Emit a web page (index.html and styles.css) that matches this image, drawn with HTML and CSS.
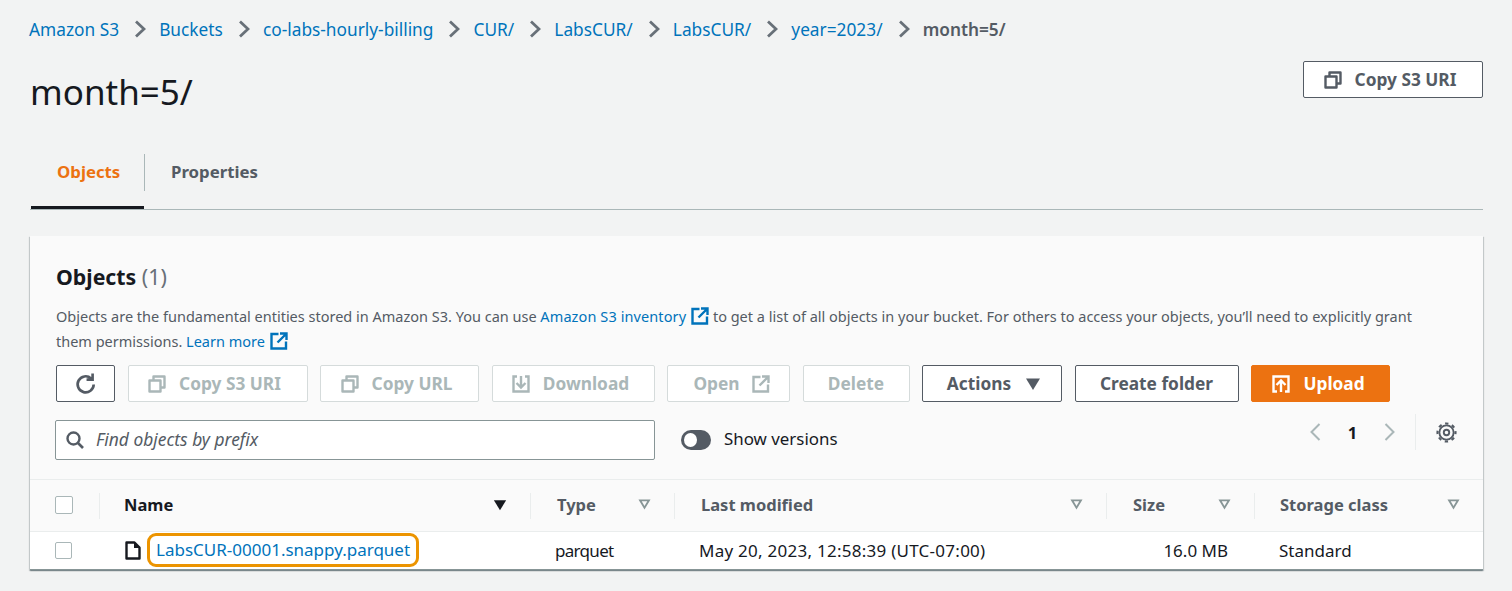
FILE: index.html
```html
<!DOCTYPE html>
<html lang="en">
<head>
  <meta charset="UTF-8">
  <title>month=5/ - S3 bucket</title>
  <link rel="stylesheet" href="styles.css">
</head>
<body>
  <svg class="sprites" width="0" height="0" aria-hidden="true">
    <symbol id="i-copy" viewBox="0 0 18 18">
      <path d="M5.500 5.500V1.500h11v11h-4M1.500 5.500h11v11h-11z" fill="none" stroke="currentColor" stroke-width="2.400" stroke-linejoin="round"/>
    </symbol>
    <symbol id="i-ext" viewBox="0 0 18 18">
      <path d="M8.500 2H1.500v14.500H16V9.500M10 1.500h6.500V8M16 2 7.500 10.500" fill="none" stroke="currentColor" stroke-width="2.400"/>
    </symbol>
    <symbol id="i-caret" viewBox="0 0 16 16">
      <path d="M1 2.500h14L8 14z" fill="currentColor"/>
    </symbol>
    <symbol id="i-caret-o" viewBox="0 0 14 14">
      <path d="M.5 1.500h13L7 12.500zM4 3.500 7 8.500l3-5z" fill="currentColor" fill-rule="evenodd"/>
    </symbol>
    <symbol id="i-chev" viewBox="0 0 12 18">
      <path d="M2 1.500 10 9l-8 7.500"/>
    </symbol>
  </svg>

  <nav class="crumbs">
    <a href="#">Amazon S3</a><svg class="sep"><use href="#i-chev"/></svg>
    <a href="#">Buckets</a><svg class="sep"><use href="#i-chev"/></svg>
    <a href="#">co-labs-hourly-billing</a><svg class="sep"><use href="#i-chev"/></svg>
    <a href="#">CUR/</a><svg class="sep"><use href="#i-chev"/></svg>
    <a href="#">LabsCUR/</a><svg class="sep"><use href="#i-chev"/></svg>
    <a href="#">LabsCUR/</a><svg class="sep"><use href="#i-chev"/></svg>
    <a href="#">year=2023/</a><svg class="sep"><use href="#i-chev"/></svg>
    <span class="current">month=5/</span>
  </nav>

  <header class="page-head">
    <h1>month=5/</h1>
    <button class="btn btn-uri"><svg class="ico"><use href="#i-copy"/></svg>Copy S3 URI</button>
  </header>

  <div class="tabs">
    <a class="tab active" href="#">Objects</a>
    <a class="tab" href="#">Properties</a>
  </div>

  <section class="card">
    <div class="card-head">
      <h2>Objects <span class="count">(1)</span></h2>
      <p class="desc">Objects are the fundamental entities stored in Amazon S3. You can use <a class="inv" href="#">Amazon S3 inventory<svg class="ext"><use href="#i-ext"/></svg></a> to get a list of all objects in your bucket. For others to access your objects, you’ll need to explicitly grant them permissions. <a href="#">Learn more<svg class="ext"><use href="#i-ext"/></svg></a></p>

      <div class="toolbar">
        <button class="btn btn-refresh" aria-label="Refresh">
          <svg class="ico-refresh" viewBox="0 0 20 20"><path d="M17 10.500a7.300 7.300 0 1 1-2.400-5.600M16 .5v5.500h-5.500" fill="none" stroke="currentColor" stroke-width="2.400"/></svg>
        </button>
        <button class="btn off w-uri"><svg class="ico"><use href="#i-copy"/></svg>Copy S3 URI</button>
        <button class="btn off w-url"><svg class="ico"><use href="#i-copy"/></svg>Copy URL</button>
        <button class="btn off w-down">
          <svg class="ico" viewBox="0 0 18 18"><path d="M5 1.500H1.500v15h15v-15H13M9 1v11M4.500 8 9 12.500 13.500 8" fill="none" stroke="currentColor" stroke-width="2.400"/></svg>Download
        </button>
        <button class="btn off w-open">Open<svg class="ico after"><use href="#i-ext"/></svg></button>
        <button class="btn off w-del">Delete</button>
        <button class="btn w-act">Actions<svg class="ico-caret"><use href="#i-caret"/></svg></button>
        <button class="btn w-folder">Create folder</button>
        <button class="btn primary">
          <svg class="ico" viewBox="0 0 18 18"><path d="M5 16.500H1.500v-15h15v15H13M9 17V6M4.500 10 9 5.500 13.500 10" fill="none" stroke="currentColor" stroke-width="2.400"/></svg>Upload
        </button>
      </div>

      <div class="filter-row">
        <label class="search">
          <svg class="ico-search" viewBox="0 0 18 18"><circle cx="7.500" cy="7.500" r="6" fill="none" stroke="currentColor" stroke-width="2.400"/><path d="M12 12l5 5" stroke="currentColor" stroke-width="2.600"/></svg>
          <span>Find objects by prefix</span>
        </label>
        <span class="toggle"><span class="knob"></span></span>
        <span class="toggle-label">Show versions</span>
        <div class="pager">
          <svg class="chev" viewBox="0 0 12 20"><path d="M10 2 2 10l8 8"/></svg>
          <span class="page-no">1</span>
          <svg class="chev" viewBox="0 0 12 20"><path d="M2 2l8 8-8 8"/></svg>
          <span class="pager-sep"></span>
          <svg class="gear" viewBox="0 0 20 20">
            <circle cx="10" cy="10" r="2.600" fill="none" stroke="currentColor" stroke-width="1.800"/>
            <circle cx="10" cy="10" r="6.800" fill="none" stroke="currentColor" stroke-width="1.800"/>
            <circle cx="10" cy="10" r="8.600" fill="none" stroke="currentColor" stroke-width="2" stroke-dasharray="3.200 3.550" stroke-dashoffset="1.600"/>
          </svg>
        </div>
      </div>
    </div>

    <div class="table">
      <div class="row head">
        <div class="cell c-check"><span class="box"></span></div>
        <div class="cell sep-l c-name"><b class="strong">Name</b><svg class="sort on"><use href="#i-caret"/></svg></div>
        <div class="cell sep-l"><b>Type</b><svg class="sort"><use href="#i-caret-o"/></svg></div>
        <div class="cell sep-l"><b>Last modified</b><svg class="sort"><use href="#i-caret-o"/></svg></div>
        <div class="cell sep-l"><b>Size</b><svg class="sort"><use href="#i-caret-o"/></svg></div>
        <div class="cell sep-l c-last"><b>Storage class</b><svg class="sort"><use href="#i-caret-o"/></svg></div>
      </div>
      <div class="row body">
        <div class="cell c-check"><span class="box small"></span></div>
        <div class="cell c-file">
          <svg class="ico-file" viewBox="0 0 16 19"><path d="M1.500 1.500h8L14.500 6.500v11h-13z" fill="none" stroke="currentColor" stroke-width="2.400" stroke-linejoin="round"/><path d="M9 1.500l5.500 5.500H9z" fill="currentColor"/></svg>
          <a class="focus" href="#">LabsCUR-00001.snappy.parquet</a>
        </div>
        <div class="cell tight">parquet</div>
        <div class="cell wide">May 20, 2023, 12:58:39 (UTC-07:00)</div>
        <div class="cell right">16.0 MB</div>
        <div class="cell">Standard</div>
      </div>
    </div>
  </section>
</body>
</html>
```

FILE: styles.css
```css
* {
  box-sizing: border-box;
}

body {
  margin: 0;
  padding: 0 29px 0 30px;
  height: 591px;
  overflow: hidden;
  background: #f2f3f3;
  color: #16191f;
  font-family: "Noto Sans", "Open Sans", sans-serif;
  font-size: 17px;
}

a {
  color: #0073bb;
  text-decoration: none;
}

.sprites {
  position: absolute;
}

/* breadcrumb */
.crumbs {
  display: flex;
  align-items: center;
  height: 20px;
  margin-top: 19px;
  margin-left: -1px;
  font-size: 17.300px;
  white-space: nowrap;
}

.sep {
  width: 12px;
  height: 18px;
  margin: 0 13.100px 0 15px;
  fill: none;
  stroke: #687078;
  stroke-width: 2.800;
}

.current {
  color: #545b64;
  font-weight: 600;
}

/* title row */
.page-head {
  display: flex;
  justify-content: space-between;
  align-items: flex-start;
  height: 115px;
}

h1 {
  margin: 30px 0 0;
  font-size: 35px;
  font-weight: 400;
  line-height: 46px;
}

.btn {
  display: inline-flex;
  align-items: center;
  justify-content: center;
  height: 37px;
  padding: 0;
  background: #fff;
  border: 1px solid #545b64;
  border-radius: 2px;
  color: #545b64;
  font: 700 17.300px "Noto Sans", sans-serif;
  white-space: nowrap;
}

.btn-uri {
  width: 180px;
  margin-top: 22px;
  padding-right: 6px;
}

.ico {
  width: 18px;
  height: 18px;
  margin-right: 13px;
  flex: none;
}

.ico.after {
  margin: 0 0 0 12px;
}

/* tabs */
.tabs {
  display: flex;
  height: 56px;
  border-bottom: 1px solid #aab7b8;
}

.tab {
  position: relative;
  display: flex;
  align-items: center;
  height: 37px;
  padding: 0 27px 2px 26px;
  color: #545b64;
  font-size: 16.800px;
  font-weight: 700;
}

.tab.active {
  width: 115px;
  padding-left: 27px;
  color: #ec7211;
  border-right: 1px solid #aab7b8;
}

.tab.active::after {
  content: "";
  position: absolute;
  left: 1px;
  right: 0;
  top: 52px;
  height: 3px;
  background: #16191f;
}

/* card */
.card {
  margin-top: 26px;
  height: 334px;
  background: #fafafa;
  box-shadow: 0 1px 1px 0 rgba(0, 28, 36, 0.3), 1px 1px 1px 0 rgba(0, 28, 36, 0.15), -1px 1px 1px 0 rgba(0, 28, 36, 0.15);
}

.card-head {
  height: 244px;
  padding: 26px 26px 0;
  border-bottom: 1px solid #eaeded;
}

h2 {
  margin: 0;
  font-size: 21.300px;
  font-weight: 700;
  line-height: 30px;
}

.count {
  color: #687078;
  font-weight: 400;
}

.desc {
  width: 1380px;
  margin: 12px 0 0;
  color: #545b64;
  font-size: 14.500px;
  line-height: 25px;
}

.inv {
  letter-spacing: 0.100px;
}

.ext {
  width: 18px;
  height: 18px;
  margin-left: 5px;
  vertical-align: -3px;
}

.toolbar {
  display: flex;
  gap: 12.500px;
  margin-top: 11px;
}

.btn.off {
  border-color: #d5dbdb;
  color: #aab7b8;
}

.btn-refresh {
  width: 59px;
  color: #545b64;
}

.ico-refresh {
  width: 22px;
  height: 22px;
}

.w-uri { width: 180px; padding-right: 6px; }
.w-url { width: 159px; padding-right: 6px; }
.w-down { width: 163px; padding-right: 5px; }
.w-open { width: 123px; padding-left: 6px; }
.w-del { width: 107px; }
.w-act { width: 140px; padding-left: 4px; }
.w-folder { width: 164px; }

.ico-caret {
  width: 16px;
  height: 16px;
  margin-left: 14px;
  color: #545b64;
}

.btn.primary {
  width: 139px;
  padding-right: 4px;
  background: #ec7211;
  border-color: #ec7211;
  color: #fff;
}

/* filter row */
.filter-row {
  display: flex;
  align-items: center;
  margin-top: 18px;
  height: 40px;
}

.search {
  display: flex;
  align-items: center;
  width: 600px;
  height: 40px;
  margin-left: -1px;
  padding: 0 0 2px 10px;
  background: #fff;
  border: 1px solid #879596;
  border-radius: 2px;
  color: #545b64;
  font-size: 17.400px;
  font-style: italic;
}

.ico-search {
  width: 18px;
  height: 18px;
  margin: 2px 12px 0 0;
  color: #545b64;
}

.toggle {
  display: flex;
  align-items: center;
  width: 30px;
  height: 20px;
  margin-left: 26px;
  padding-left: 3px;
  background: #545b64;
  border-radius: 10px;
}

.knob {
  width: 13px;
  height: 14px;
  background: #fff;
  border-radius: 50%;
}

.toggle-label {
  margin: -4px 0 0 13px;
  font-size: 16.900px;
}

.pager {
  display: flex;
  align-items: center;
  margin: -16px 0 0 auto;
  height: 38px;
}

.chev {
  width: 13px;
  height: 20px;
  fill: none;
  stroke: #aab7b8;
  stroke-width: 2;
}

.page-no {
  width: 61px;
  text-align: center;
  font-size: 16.500px;
  font-weight: 700;
}

.pager-sep {
  width: 1px;
  height: 36px;
  margin: 0 20px 0 19px;
  background: #eaeded;
}

.gear {
  width: 21px;
  height: 21px;
  color: #545b64;
}

/* table */
.row {
  display: grid;
  grid-template-columns: 69px 431px 144px 432px 148px 1fr;
}

.row.head {
  height: 52px;
  border-bottom: 1px solid #eaeded;
}

.row.body {
  height: 38px;
  background: #fff;
  border-bottom: 1px solid #879596;
}

.cell {
  position: relative;
  display: flex;
  align-items: center;
  padding: 0 26px 0 25px;
  white-space: nowrap;
}

.row.head .cell {
  justify-content: space-between;
  padding: 0 23px 2px 27px;
  color: #545b64;
}

.row.head .c-name,
.row.head .c-check {
  padding-left: 25px;
}

.row.head .c-last {
  padding-left: 26px;
}

.row.head b {
  font-weight: 700;
  font-size: 16.500px;
}

.row.head b.strong {
  color: #16191f;
}

.sep-l::before {
  content: "";
  position: absolute;
  left: 0;
  top: 13px;
  height: 26px;
  border-left: 1px solid #eaeded;
}

.box {
  width: 18px;
  height: 18px;
  background: #fff;
  border: 1px solid #aab7b8;
  border-radius: 2px;
}

.box.small {
  width: 17px;
  height: 17px;
}

.sort {
  width: 13px;
  height: 13px;
  color: #879596;
}

.sort.on {
  width: 14px;
  height: 14px;
  color: #16191f;
}

.c-file {
  padding-left: 26px;
}

.ico-file {
  width: 16px;
  height: 19px;
  margin-right: 6px;
  flex: none;
}

.focus {
  margin-bottom: 2px;
  padding: 2px 6px 3px;
  border: 3px solid #ec9400;
  border-radius: 9px;
  background: #fff;
}

.tight {
  letter-spacing: -0.700px;
}

.wide {
  letter-spacing: 0.260px;
}

.right {
  justify-content: flex-end;
}
```
